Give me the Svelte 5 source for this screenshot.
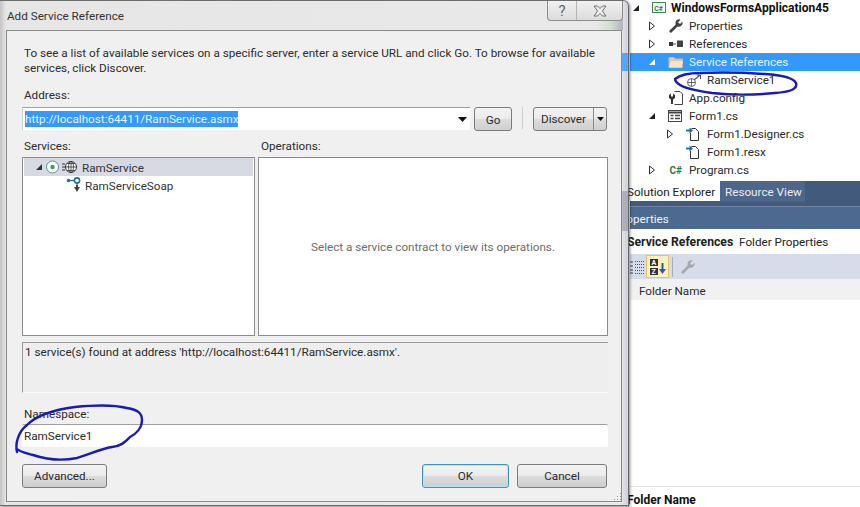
<script lang="ts">
	// Add Service Reference dialog sitting over the VS solution explorer.
	type Row = { label: string; icon: string; arrow?: 'open' | 'closed'; depth: number; selected?: boolean; bold?: boolean };

	const rows: Row[] = [
		{ label: 'WindowsFormsApplication45', icon: 'proj', arrow: 'open', depth: 0, bold: true },
		{ label: 'Properties', icon: 'wrench', arrow: 'closed', depth: 1 },
		{ label: 'References', icon: 'refs', arrow: 'closed', depth: 1 },
		{ label: 'Service References', icon: 'folder', arrow: 'open', depth: 1, selected: true },
		{ label: 'RamService1', icon: 'svc', depth: 2 },
		{ label: 'App.config', icon: 'config', depth: 1 },
		{ label: 'Form1.cs', icon: 'form', arrow: 'open', depth: 1 },
		{ label: 'Form1.Designer.cs', icon: 'file', arrow: 'closed', depth: 2 },
		{ label: 'Form1.resx', icon: 'file', depth: 2 },
		{ label: 'Program.cs', icon: 'cs', arrow: 'closed', depth: 1 }
	];
</script>

<div class="page">
	<aside class="ide">
		<ul class="tree">
			{#each rows as row}
				<li class="row depth{row.depth}" class:selected={row.selected} class:bold={row.bold}>
					<span class="arrow">
						{#if row.arrow === 'open'}
							<svg width="8" height="8" viewBox="0 0 8 8"><path d="M7 1V7H1Z" fill={row.selected ? '#fff' : '#222'} /></svg>
						{:else if row.arrow === 'closed'}
							<svg width="8" height="10" viewBox="0 0 8 10"><path d="M1.500 1L6.500 5L1.500 9Z" fill="#fff" stroke="#333" /></svg>
						{/if}
					</span>
					<span class="icon">
						{#if row.icon === 'proj'}
							<svg width="16" height="16" viewBox="0 0 16 16"><rect x="0.500" y="2.500" width="13" height="10" fill="#fff" stroke="#3c8a4e" /><text x="2.200" y="10.500" class="csglyph">C#</text></svg>
						{:else if row.icon === 'wrench'}
							<svg width="16" height="16" viewBox="0 0 16 16"><path d="M14.500 3.500L12 6L10 4.500L12.500 1.500C10 .5 7.500 2 7.500 5C7.500 6 7.700 6.500 7.300 7L1.500 12.500C.7 13.500 2.500 15.300 3.500 14.500L9 9C10 8.600 11 9 12 8.500C14 7.800 15 5.800 14.500 3.500Z" fill="#444" /></svg>
						{:else if row.icon === 'refs'}
							<svg width="16" height="16" viewBox="0 0 16 16"><rect x="1" y="6" width="4" height="4" fill="#333" /><rect x="5" y="7.500" width="3" height="1" fill="#555" /><rect x="9" y="4.500" width="6" height="6.500" fill="#444" /></svg>
						{:else if row.icon === 'folder'}
							<svg width="16" height="16" viewBox="0 0 16 16"><path d="M1 3.500H6L7.500 5H14.500V13.500H1Z" fill="#e3c7a8" stroke="#d4b592" /><path d="M3 7H15L13.500 13.500H1Z" fill="#f6e3cb" /></svg>
						{:else if row.icon === 'svc'}
							<svg width="18" height="16" viewBox="0 0 18 16"><circle cx="5.500" cy="10.500" r="4" fill="#fff" stroke="#666" /><path d="M1.500 10.500H9.500M5.500 6.500V14.500" stroke="#666" /><path d="M8 8L14 3M10.500 3H14.500V7" fill="none" stroke="#555" stroke-width="1.200" /><rect x="14" y="0" width="3" height="3" fill="#e4c9a4" /></svg>
						{:else if row.icon === 'config'}
							<svg width="16" height="16" viewBox="0 0 16 16"><path d="M6.500 1.500H12L14.500 4V14.500H6.500" fill="#fff" stroke="#444" /><path d="M1 5L3 3.500V6.500H5V3.500L7 5V8L5 9.500V14H3V9.500L1 8Z" fill="#333" /></svg>
						{:else if row.icon === 'form'}
							<svg width="16" height="16" viewBox="0 0 16 16"><rect x="0.500" y="2.500" width="13" height="11" fill="#fff" stroke="#444" /><path d="M0.500 4.500H13.500" stroke="#444" stroke-width="2" /><path d="M2.500 7.500H5.500M7 7.500H12M2.500 10.500H5.500M7 10.500H12" stroke="#444" stroke-width="1.400" /></svg>
						{:else if row.icon === 'file'}
							<svg width="16" height="16" viewBox="0 0 16 16"><path d="M5.500 2.500H9.500L12.500 5.500V14.500H4.500V7" fill="#fff" stroke="#333" /><path d="M0 4.500H4" stroke="#1f66b0" stroke-width="1.800" /><path d="M3.500 1.500L7 4.500L3.500 7.500Z" fill="#1f66b0" /></svg>
						{:else if row.icon === 'cs'}
							<svg width="16" height="16" viewBox="0 0 16 16"><text x="1.500" y="12" class="csglyph big">C#</text></svg>
						{/if}
					</span>
					<span class="name">{row.label}</span>
				</li>
			{/each}
		</ul>

		<div class="tabs">
			<span class="tab active">Solution Explorer</span>
			<span class="tab">Resource View</span>
		</div>
		<div class="props-head">Properties</div>
		<div class="props-title"><b>Service References</b> Folder Properties</div>
		<div class="props-tools">
			<svg class="tool" width="16" height="16" viewBox="0 0 16 16">
				<path d="M1 3H4M1 7H4M1 11H4M1 14H4" stroke="#444" />
				<path d="M6 2.500H15M6 5.500H15M6 8.500H15M6 11.500H15M6 14.500H15" stroke="#555" stroke-dasharray="1 1" />
			</svg>
			<span class="tool-on">
				<svg width="20" height="20" viewBox="0 0 20 20">
					<rect x="2" y="2" width="8" height="7" fill="#333" /><rect x="2" y="11" width="8" height="7" fill="#333" />
					<text x="3.500" y="8" class="az">A</text><text x="3.500" y="17" class="az">Z</text>
					<path d="M14.500 6V14" stroke="#1f5fb5" stroke-width="2" /><path d="M11 12L14.500 17L18 12Z" fill="#1f5fb5" />
				</svg>
			</span>
			<span class="tool-sep"></span>
			<svg class="wrench-off" width="16" height="16" viewBox="0 0 16 16"><path d="M14.500 3.500L12 6L10 4.500L12.500 1.500C10 .5 7.500 2 7.500 5C7.500 6 7.700 6.500 7.300 7L1.500 12.500C.7 13.500 2.500 15.300 3.500 14.500L9 9C10 8.600 11 9 12 8.500C14 7.800 15 5.800 14.500 3.500Z" fill="#a3a7ae" /></svg>
		</div>
		<div class="props-row">Folder Name</div>
		<div class="props-fill"></div>
		<div class="props-desc">Folder Name</div>
	</aside>

	<section class="dialog">
		<header class="caption">
			<span class="title">Add Service Reference</span>
			<div class="caption-btns">
				<span class="cap help">?</span>
				<span class="cap close">
					<svg width="14" height="12" viewBox="0 0 14 12"><path d="M1 1H4.500L7 3.500L9.500 1H13L9.500 6L13 11H9.500L7 8.500L4.500 11H1L4.500 6Z" fill="#e9ecec" stroke="#707070" /></svg>
				</span>
			</div>
		</header>
		<div class="client">
			<p class="intro">To see a list of available services on a specific server, enter a service URL and click Go. To browse for available services, click Discover.</p>

			<div class="lbl addr-lbl">Address:</div>
			<div class="addr-row">
				<div class="combo">
					<span class="sel">http://localhost:64411/RamService.asmx</span>
					<svg class="drop" width="9" height="5" viewBox="0 0 9 5"><path d="M0 0H9L4.500 5Z" fill="#111" /></svg>
				</div>
				<button class="btn go">Go</button>
				<span class="vsep"></span>
				<div class="btn split"><span class="split-main">Discover</span><span class="split-arrow"><svg width="7" height="4" viewBox="0 0 7 4"><path d="M0 0H7L3.500 4Z" fill="#111" /></svg></span></div>
			</div>

			<div class="panes">
				<div class="lbl">Services:</div>
				<div class="lbl ops-lbl">Operations:</div>
				<div class="pane services">
					<div class="svc-row hl">
						<svg width="8" height="8" viewBox="0 0 8 8"><path d="M7 1V7H1Z" fill="#333" /></svg>
						<svg width="32" height="16" viewBox="0 0 32 16">
							<circle cx="6.500" cy="8" r="6" fill="#fff" stroke="#5a8f9c" /><circle cx="6.500" cy="8" r="2.200" fill="#3aa348" />
							<path d="M16 5H19M16 8H19M16 11H19" stroke="#333" />
							<circle cx="25" cy="8" r="5.500" fill="#fff" stroke="#333" /><path d="M19.500 8H30.500M25 2.500V13.500M21 4.500H29M21 11.500H29" stroke="#333" stroke-width=".8" /><ellipse cx="25" cy="8" rx="2.500" ry="5.500" fill="none" stroke="#333" stroke-width=".8" />
						</svg>
						<span>RamService</span>
					</div>
					<div class="svc-row child">
						<svg width="16" height="16" viewBox="0 0 16 16">
							<circle cx="2.500" cy="3.500" r="1.800" fill="#27709a" /><path d="M4 3.500H8" stroke="#27709a" stroke-width="1.300" />
							<circle cx="11" cy="3.500" r="2.600" fill="#fff" stroke="#27709a" stroke-width="1.600" />
							<path d="M8 10H14L11 15Z" fill="#444" /><rect x="10" y="7.500" width="2" height="3" fill="#444" />
						</svg>
						<span>RamServiceSoap</span>
					</div>
				</div>
				<div class="pane ops">Select a service contract to view its operations.</div>
			</div>

			<div class="status">1 service(s) found at address 'http://localhost:64411/RamService.asmx'.</div>

			<div class="lbl ns-lbl">Namespace:</div>
			<div class="ns-input">RamService1</div>

			<div class="foot">
				<button class="btn adv">Advanced...</button>
				<div class="foot-right">
					<button class="btn ok">OK</button>
					<button class="btn cancel">Cancel</button>
				</div>
			</div>
		</div>
		<svg class="grip" width="10" height="10" viewBox="0 0 10 10"><path d="M8 1h1v1H8zM5 4h1v1H5zM8 4h1v1H8zM2 7h1v1H2zM5 7h1v1H5zM8 7h1v1H8z" fill="#999" /></svg>
	</section>

	<svg class="ink" width="860" height="507" viewBox="0 0 860 507">
		<path d="M675 79C680 75 690 73 700 73C725 72 750 73 765 74C780 75 793 77 796 83C798 90 788 92 775 93C755 95 730 95 712 93C698 91 686 89 680 85C677 83 675 81 675 79Z" />
		<path d="M17 452C15 444 18 432 27 425C35 417 52 410 75 407C95 405 115 405 127 408C138 410 142 413 142 420C142 428 136 434 130 437C126 441 122 446 112 447C100 449 88 455 77 458C62 461 45 459 33 455C26 453 20 452 17 449" />
	</svg>
</div>

<style>
	:global(body) {
		margin: 0;
		background: #fff;
	}
	.page {
		position: relative;
		width: 860px;
		height: 507px;
		overflow: hidden;
		display: flex;
		justify-content: flex-end;
		font-family: Roboto, 'Noto Sans', sans-serif;
		font-size: 11.7px;
		color: #2a2a2a;
	}

	/* solution explorer + properties behind the dialog */
	.ide {
		width: 230px;
		height: 507px;
		display: flex;
		flex-direction: column;
		background: #fff;
	}
	.tree {
		list-style: none;
		margin: -1px 0 0;
		padding: 0;
		height: 182px;
	}
	.row {
		display: flex;
		align-items: center;
		height: 18px;
		white-space: nowrap;
	}
	.row.depth0 {
		padding-left: 2px;
	}
	.row.depth1 {
		padding-left: 18px;
	}
	.row.depth2 {
		padding-left: 36px;
	}
	.row.bold {
		font-weight: 700;
		font-size: 12px;
		color: #111;
	}
	.row.selected {
		background: #3399ff;
		color: #e6f2ff;
	}
	.arrow {
		width: 17px;
		flex: none;
		display: flex;
		align-items: center;
	}
	.icon {
		width: 21px;
		height: 16px;
		padding-left: 3px;
		flex: none;
	}
	.row.depth0 .icon {
		width: 19px;
	}
	.csglyph {
		font-size: 7px;
		font-weight: 700;
		fill: #2f7d3e;
	}
	.csglyph.big {
		font-size: 10px;
	}
	.tabs {
		display: flex;
		height: 26px;
		background: #425a7c;
		box-sizing: border-box;
		border-bottom: 1px solid #7286a4;
	}
	.tab {
		height: 21px;
		width: 85px;
		box-sizing: border-box;
		line-height: 23px;
		padding-left: 5px;
		background: #4e6689;
		color: #e8edf4;
		white-space: nowrap;
	}
	.tab.active {
		background: #fff;
		color: #222;
		width: 90px;
		height: 20px;
		padding: 0;
		line-height: 22px;
		text-indent: -3px;
	}
	.props-head {
		height: 22px;
		line-height: 25px;
		background: #4c6a90;
		color: #eef2f7;
		text-indent: -15px;
	}
	.props-title {
		height: 25px;
		line-height: 27px;
		background: #fff;
		text-indent: -3px;
		white-space: nowrap;
		color: #222;
	}
	.props-title b {
		font-weight: 700;
		font-size: 12.2px;
		margin-right: 3px;
	}
	.props-tools {
		height: 25px;
		background: #d6dce9;
		display: flex;
		align-items: center;
	}
	.tool {
		margin-left: -1px;
		flex: none;
	}
	.tool-on {
		width: 21px;
		height: 21px;
		margin-left: 1px;
		background: #fdf0c0;
		border: 1px solid #e5c365;
		display: flex;
		align-items: center;
		justify-content: center;
		flex: none;
	}
	.tool-sep {
		width: 1px;
		height: 20px;
		background: #a5aebf;
		margin: 0 7px 0 3px;
	}
	.props-row {
		height: 21px;
		line-height: 25px;
		background: #f1f1f1;
		padding-left: 9px;
	}
	.props-fill {
		flex: 1;
		border-bottom: 1px solid #e3e3e3;
	}
	.props-desc {
		height: 20px;
		line-height: 26px;
		font-weight: 700;
		font-size: 12px;
		color: #111;
		text-indent: -3px;
	}

	/* dialog window */
	.dialog {
		position: absolute;
		left: 0;
		top: 0;
		width: 629px;
		height: 506px;
		box-sizing: border-box;
		display: flex;
		flex-direction: column;
		padding: 0 6px 3px;
		border: 1px solid #6d6d6d;
		border-left: 0;
		border-top-right-radius: 6px;
		background:
			linear-gradient(rgba(51, 153, 255, 0.8), rgba(51, 153, 255, 0.8)) right 0 top 52px / 6px 18px no-repeat,
			linear-gradient(rgba(90, 100, 120, 0.35), rgba(90, 100, 120, 0.35)) right 0 top 190px / 6px 40px no-repeat,
			linear-gradient(90deg, #c4c4c4 0, #e6e6e6 6px, #e9e9e9 620px, #c9ced8 629px);
		box-shadow: 1px 1px 3px rgba(0, 0, 0, 0.5);
	}
	.caption {
		height: 29px;
		flex: none;
		display: flex;
		justify-content: space-between;
		align-items: flex-start;
		background: linear-gradient(90deg, transparent 590px, #cfe0cb 605px, #b4b6c4 616px);
		margin-right: -1px;
	}
	.title {
		margin-top: 7px;
		margin-left: 1px;
		color: #333;
		line-height: 17px;
	}
	.caption-btns {
		display: flex;
		height: 20px;
		border: 1px solid #8d8d8d;
		border-top: 0;
		border-radius: 0 0 4px 4px;
		box-sizing: border-box;
		background: linear-gradient(#f1f1f1, #dcdcdc);
	}
	.cap {
		display: flex;
		align-items: center;
		justify-content: center;
		height: 19px;
	}
	.help {
		width: 28px;
		border-right: 1px solid #b5b5b5;
		font-size: 15px;
		color: #666;
	}
	.close {
		width: 45px;
	}
	.client {
		flex: 1;
		box-sizing: border-box;
		border: 1px solid #8a8a8a;
		background: #f0f0f0;
		padding: 15px 14px 0 15px;
		display: flex;
		flex-direction: column;
	}
	.intro {
		margin: 0;
		padding-left: 2px;
		line-height: 15px;
		width: 578px;
		color: #2c2c2c;
	}
	.lbl {
		height: 15px;
		line-height: 15px;
		padding-left: 2px;
		color: #2c2c2c;
	}
	.ops-lbl {
		padding-left: 3px;
	}
	.addr-lbl {
		margin-top: 12px;
	}
	.addr-row {
		display: flex;
		align-items: stretch;
		height: 24px;
		margin-top: 4px;
	}
	.combo {
		width: 448px;
		height: 23px;
		box-sizing: border-box;
		background: #fff;
		border-top: 1px solid #a0a0a0;
		border-left: 1px solid #d0d0d0;
		display: flex;
		align-items: center;
		justify-content: space-between;
		padding: 0 3px 0 2px;
	}
	.sel {
		background: #3399ff;
		color: #e9f3ff;
		line-height: 16px;
	}
	.btn {
		font: inherit;
		color: #2a2a2a;
		box-sizing: border-box;
		height: 24px;
		padding: 0;
		border: 1px solid #7c7c7c;
		border-radius: 3px;
		background: linear-gradient(#f3f3f3 0, #ebebeb 48%, #dcdcdc 52%, #cfcfcf 100%);
	}
	.go {
		width: 38px;
		margin-left: 4px;
		padding-top: 1px;
	}
	.vsep {
		width: 1px;
		height: 22px;
		background: #cdcdcd;
		margin: 0 10px;
	}
	.split {
		width: 74px;
		display: flex;
		align-items: center;
	}
	.split-main {
		flex: 1;
		text-align: center;
		line-height: 26px;
	}
	.split-arrow {
		width: 12px;
		height: 22px;
		border-left: 1px solid #8a8a8a;
		display: flex;
		align-items: center;
		justify-content: center;
		flex: none;
	}
	.panes {
		display: grid;
		grid-template-columns: 233px 350px;
		grid-template-rows: 15px 179px;
		column-gap: 3px;
		row-gap: 3px;
		margin-top: 8px;
	}
	.pane {
		box-sizing: border-box;
		background: #fff;
		border: 1px solid #8c8c8c;
	}
	.services {
		padding: 0 1px;
		color: #333;
	}
	.svc-row {
		height: 18px;
		display: flex;
		align-items: center;
		white-space: nowrap;
	}
	.svc-row span {
		padding-top: 1px;
	}
	.svc-row.hl {
		background: #d8dae3;
		padding-left: 11px;
		gap: 3px;
	}
	.svc-row.hl span {
		margin-left: 1px;
	}
	.svc-row.child {
		padding-left: 42px;
		gap: 3px;
	}
	.ops {
		display: flex;
		align-items: center;
		justify-content: center;
		color: #6d6d6d;
	}
	.status {
		height: 51px;
		margin-top: 6px;
		box-sizing: border-box;
		border-top: 1px solid #9a9a9a;
		border-left: 1px solid #9a9a9a;
		border-bottom: 1px solid #fbfbfb;
		padding-left: 2px;
		width: 586px;
		background: #eeeeee;
		line-height: 18px;
	}
	.ns-lbl {
		margin-top: 14px;
	}
	.ns-input {
		height: 23px;
		width: 586px;
		margin-top: 2px;
		box-sizing: border-box;
		background: #fff;
		border-top: 1px solid #a0a0a0;
		padding-left: 2px;
		line-height: 22px;
		border-radius: 2px;
	}
	.foot {
		display: flex;
		justify-content: space-between;
		width: 585px;
		margin-top: 17px;
	}
	.adv {
		width: 85px;
	}
	.foot-right {
		display: flex;
		gap: 8px;
	}
	.ok {
		width: 87px;
		border-color: #3f93b8;
		box-shadow: inset 0 0 0 1px #b6e3f5;
	}
	.cancel {
		width: 90px;
	}
	.grip {
		position: absolute;
		right: 6px;
		bottom: 3px;
	}
	.ink {
		position: absolute;
		left: 0;
		top: 0;
		pointer-events: none;
	}
	.ink path {
		fill: none;
		stroke: #1a1ab4;
		stroke-width: 2.400;
		stroke-linecap: round;
	}
	.az {
		font-size: 7px;
		font-weight: 700;
		fill: #fff;
	}
</style>
